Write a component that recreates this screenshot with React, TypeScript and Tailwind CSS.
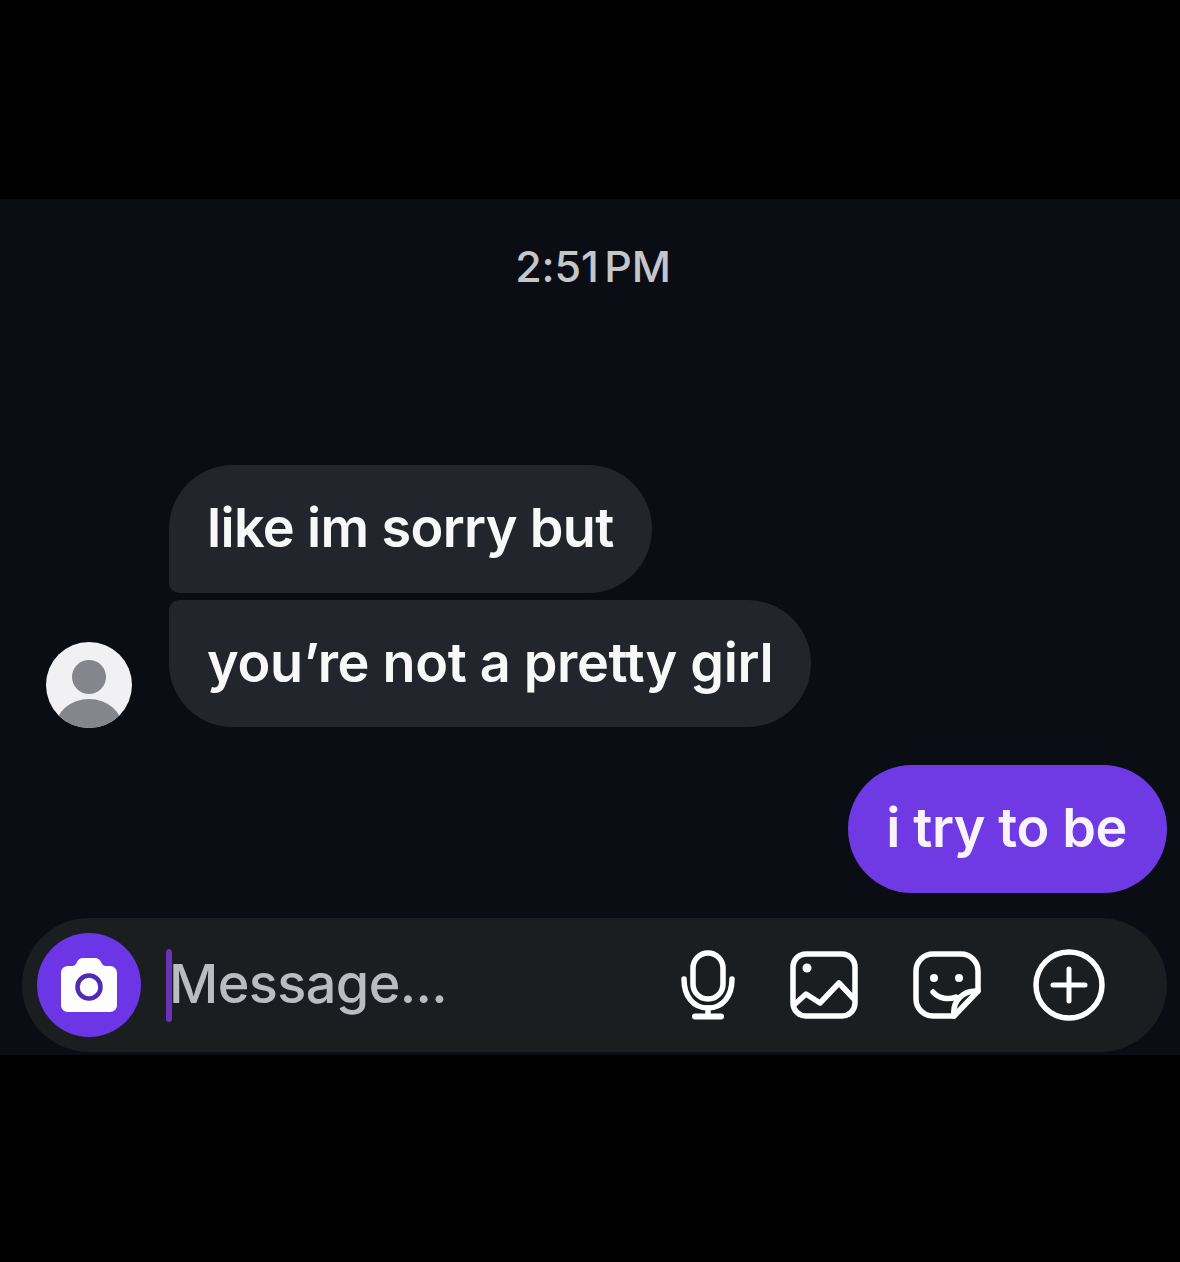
import React from 'react';

function Avatar() {
    return (
        <svg width="86" height="86" viewBox="0 0 86 86" className="shrink-0 -mb-[1px]">
            <defs>
                <clipPath id="avatar-clip">
                    <circle cx="43" cy="43" r="43" />
                </clipPath>
            </defs>
            <circle cx="43" cy="43" r="43" fill="#f1f1f3" />
            <circle cx="43" cy="35" r="17" fill="#85868c" />
            <ellipse cx="43" cy="87" rx="34" ry="30" fill="#85868c" clipPath="url(#avatar-clip)" />
        </svg>
    );
}

function CameraButton() {
    return (
        <div className="w-[104px] h-[104px] rounded-full bg-[#6c35e6] flex items-center justify-center shrink-0">
            <svg width="56" height="54" viewBox="0 0 56 54">
                <path d="M7 8 H11 C14 8 15 6 16 4 C17.500 1.500 19 0 22 0 H34 C37 0 38.500 1.500 40 4 C41 6 42 8 45 8 H49 C53 8 56 11 56 15 V47 C56 51 53 54 49 54 H7 C3 54 0 51 0 47 V15 C0 11 3 8 7 8 Z" fill="#fdfdfd" />
                <circle cx="28" cy="29" r="11.5" fill="none" stroke="#4f2bb5" strokeWidth="4.5" />
            </svg>
        </div>
    );
}

function MicIcon() {
    return (
        <svg width="54" height="70" viewBox="0 0 54 70" fill="none" stroke="#fff" strokeWidth="5.5" strokeLinecap="round">
            <rect x="12" y="3" width="30" height="46" rx="15" />
            <path d="M3 29 C3 46 12 58 27 58 C42 58 51 46 51 29" />
            <path d="M27 58 V66" />
            <path d="M14 66.500 H40" strokeWidth="6" />
        </svg>
    );
}

function ImageIcon() {
    return (
        <svg width="68" height="68" viewBox="0 0 68 68" fill="none" stroke="#fff" strokeWidth="5.5" strokeLinecap="round" strokeLinejoin="round">
            <rect x="3" y="3" width="62" height="62" rx="13" />
            <circle cx="17" cy="17" r="4.500" fill="#fff" stroke="none" />
            <path d="M5 53 L16 43 L30 52 L49 32 L64 48" />
        </svg>
    );
}

function StickerIcon() {
    return (
        <svg width="68" height="68" viewBox="0 0 68 68" fill="none" stroke="#fff" strokeWidth="5.5" strokeLinecap="round" strokeLinejoin="round">
            <path d="M20 3 H48 A17 17 0 0 1 65 20 V40 L41 65 H20 A17 17 0 0 1 3 48 V20 A17 17 0 0 1 20 3 Z" />
            <circle cx="21" cy="27" r="4" fill="#fff" stroke="none" />
            <circle cx="46" cy="27" r="4" fill="#fff" stroke="none" />
            <path d="M20 41 C26 48 36 49 43 46" />
            <path d="M65 40 C50 39 39 50 41 65" />
        </svg>
    );
}

function PlusIcon() {
    return (
        <svg width="72" height="72" viewBox="0 0 72 72" fill="none" stroke="#fff" strokeWidth="5.5" strokeLinecap="round">
            <circle cx="36" cy="36" r="33" />
            <path d="M20 36 H52 M36 20 V52" strokeWidth="5" />
        </svg>
    );
}

export default function App() {
    return (
        <div className="w-[1180px] h-[1262px] bg-black pt-[199px] overflow-hidden" style={{ fontFamily: "Inter, 'Liberation Sans', sans-serif" }}>
            <div className="h-[856px] bg-[#0a0d14] flex flex-col">
                <div className="mt-[43px] pl-[6px] text-center text-[43px] leading-[48px] font-medium tracking-[-0.1px] [word-spacing:-6px] text-[#c4c6ca]">2:51 PM</div>

                <div className="mt-[175px] pl-[46px] flex items-end gap-[37px]">
                    <Avatar />
                    <div className="flex flex-col items-start gap-[7px]">
                        <div className="h-[128px] pb-[3px] px-[38px] flex items-center bg-[#23252c] rounded-[64px] rounded-bl-[10px] text-[54px] tracking-[-0.65px] font-semibold text-[#f8f8f8]">like im sorry but</div>
                        <div className="h-[127px] pb-[3px] px-[38px] flex items-center bg-[#23252c] rounded-[64px] rounded-tl-[10px] text-[54px] tracking-[-0.33px] font-semibold text-[#f8f8f8]">you’re not a pretty girl</div>
                    </div>
                </div>

                <div className="mt-[38px] mr-[13px] self-end h-[128px] pb-[3px] pl-[38px] pr-[40px] flex items-center bg-[#6f3ae4] rounded-[64px] text-[54px] tracking-[-0.4px] font-semibold text-[#f8f4ff]">i try to be</div>

                <div className="mt-[25px] ml-[22px] w-[1145px] h-[134px] rounded-[67px] bg-[#1a1e21] flex items-center pl-[15px]">
                    <CameraButton />
                    <div className="ml-[25px] w-[6px] h-[73px] rounded-sm bg-[#6a32b8] shrink-0" />
                    <span className="-ml-[3px] pb-[3px] text-[54px] tracking-[-0.6px] font-medium text-[#b9bcc0]">Message...</span>
                    <div className="ml-auto flex items-center pr-[62px]">
                        <MicIcon />
                        <div className="ml-[55px]"><ImageIcon /></div>
                        <div className="ml-[55px]"><StickerIcon /></div>
                        <div className="ml-[52px]"><PlusIcon /></div>
                    </div>
                </div>
            </div>
        </div>
    );
}
